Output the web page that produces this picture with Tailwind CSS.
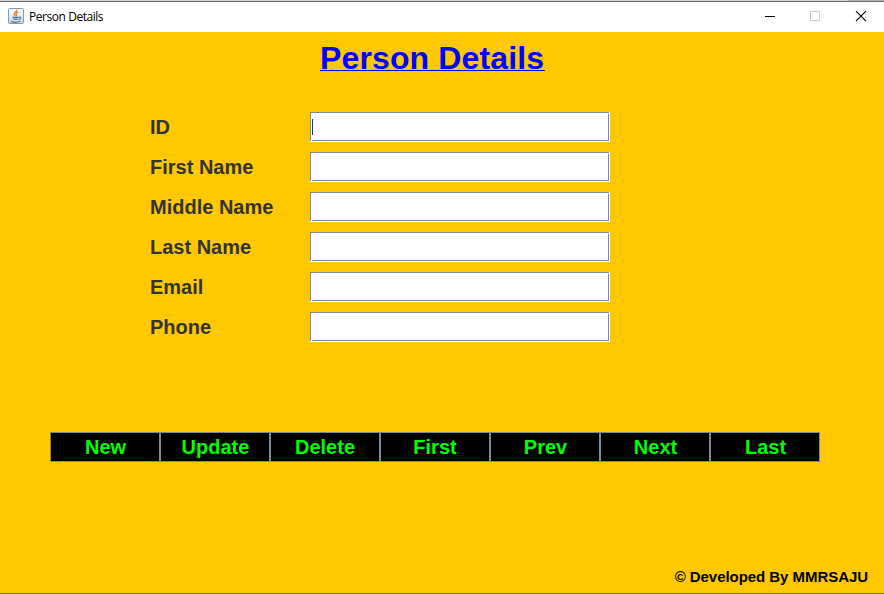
<!DOCTYPE html>
<html lang="en">
<head>
<meta charset="utf-8">
<title>Person Details</title>
<script src="https://cdn.jsdelivr.net/npm/@tailwindcss/browser@4"></script>
</head>
<body class="w-[884px] h-[594px] overflow-hidden font-['Liberation_Sans',Arial,sans-serif]">
<div class="flex flex-col w-[884px] h-[594px] bg-[#ffc800] border-b border-[#6b6b6b]">
  <header class="flex h-8 shrink-0 flex-col bg-white">
    <div class="flex h-px shrink-0"><div class="w-[848px] bg-[#d2d2d2]"></div><div class="flex-1 bg-[#b0b0b0]"></div></div>
    <div class="h-px shrink-0 bg-[#6b6b6b]"></div>
    <div class="flex h-[30px] items-center pl-2">
      <svg class="mb-0.5" width="16" height="16" viewBox="0 0 16 16" fill="none">
        <defs><linearGradient id="g" x1="0" y1="0" x2="0" y2="1"><stop stop-color="#f7f9fb"/><stop offset=".5" stop-color="#e9eff4"/><stop offset="1" stop-color="#c5d2dd"/></linearGradient></defs>
        <rect x=".5" y=".5" width="15" height="15" rx="1" fill="url(#g)" stroke="#8398ab"/>
        <path d="M9 1.8C9.2 4 5.7 4.6 6.2 6.3c.2.8 1 1.3 1.1 2M10.2 4.2C8.4 5 7.5 5.9 8.5 7c.5.6.3 1-.1 1.5" stroke="#ed8030" stroke-width="1.4"/>
        <path d="M4.5 9.3h6.3M5.2 11.2h5M3 13.4c2.5 1 7 .9 9.3-.1M11 9.3c2.5-.6 2.3 1.8-.2 2.3" stroke="#53799e" stroke-width="1.2"/>
      </svg>
      <span class="ml-[5px] w-[715px] text-[12px] leading-4 text-black tracking-[-0.45px] font-['Open_Sans','Noto_Sans',sans-serif]">Person Details</span>
      <div class="flex flex-1 items-center">
        <svg class="ml-[20px] mb-0.5" width="106" height="16" viewBox="0 0 106 16" fill="none" shape-rendering="crispEdges">
          <path d="M1 8.5h10" stroke="#000"/>
          <rect x="46.5" y="3.5" width="9" height="9" stroke="#ccc"/>
          <path shape-rendering="geometricPrecision" d="M92 3.2l10 10M102 3.2l-10 10" stroke="#000" stroke-width="1.1"/>
        </svg>
      </div>
    </div>
  </header>
  <main class="flex flex-1 flex-col">
    <h1 class="ml-[320px] mt-2 h-[31px] w-[225px] border-b border-[#0000ff] text-[32px] leading-[36px] font-bold text-[#0000ff] whitespace-nowrap tracking-[0.13px]">Person Details</h1>
    <form class="ml-[150px] mt-[41px] grid w-[460px] grid-cols-[160px_300px] gap-y-[10px] text-[20px] leading-[30px] font-bold text-[#333333]">
      <label>ID</label>
      <div class="border-r border-b border-white"><div class="h-[29px] border-t border-l border-[#7a8a99] bg-white pt-px pl-px"><div class="flex h-[27px] items-start border-r border-b border-[#7a8a99] pt-[5px]"><div class="h-4 w-px bg-[#333]"></div></div></div></div>
      <label>First Name</label>
      <div class="border-r border-b border-white"><div class="h-[29px] border-t border-l border-[#7a8a99] bg-white pt-px pl-px"><div class="h-[27px] border-r border-b border-[#7a8a99]"></div></div></div>
      <label>Middle Name</label>
      <div class="border-r border-b border-white"><div class="h-[29px] border-t border-l border-[#7a8a99] bg-white pt-px pl-px"><div class="h-[27px] border-r border-b border-[#7a8a99]"></div></div></div>
      <label>Last Name</label>
      <div class="border-r border-b border-white"><div class="h-[29px] border-t border-l border-[#7a8a99] bg-white pt-px pl-px"><div class="h-[27px] border-r border-b border-[#7a8a99]"></div></div></div>
      <label>Email</label>
      <div class="border-r border-b border-white"><div class="h-[29px] border-t border-l border-[#7a8a99] bg-white pt-px pl-px"><div class="h-[27px] border-r border-b border-[#7a8a99]"></div></div></div>
      <label>Phone</label>
      <div class="border-r border-b border-white"><div class="h-[29px] border-t border-l border-[#7a8a99] bg-white pt-px pl-px"><div class="h-[27px] border-r border-b border-[#7a8a99]"></div></div></div>
    </form>
    <nav class="ml-[50px] mt-[90px] grid w-[770px] grid-cols-7 text-[20px] leading-7 font-bold text-[#00ff00]">
      <button class="h-[30px] border border-[#7a8a99] bg-black pl-px">New</button>
      <button class="h-[30px] border border-[#7a8a99] bg-black pl-px">Update</button>
      <button class="h-[30px] border border-[#7a8a99] bg-black">Delete</button>
      <button class="h-[30px] border border-[#7a8a99] bg-black">First</button>
      <button class="h-[30px] border border-[#7a8a99] bg-black pl-px">Prev</button>
      <button class="h-[30px] border border-[#7a8a99] bg-black pl-px">Next</button>
      <button class="h-[30px] border border-[#7a8a99] bg-black pl-px">Last</button>
    </nav>
    <footer class="mt-auto mb-[6px] pr-[16px] text-right text-[15px] leading-5 font-bold text-black tracking-[-0.05px]">© Developed By MMRSAJU</footer>
  </main>
</div>
</body>
</html>
